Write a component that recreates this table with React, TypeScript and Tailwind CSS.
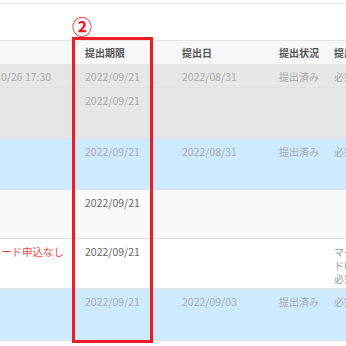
import React from 'react';

type Row = {
  bg: string;
  h: string;
  dim: boolean;
  cells: React.ReactNode[];
};

const rows: Row[] = [
  { bg: 'bg-[#e6e6e6]', h: 'h-[24px]', dim: true, cells: ['0/26 17:30', '2022/09/21', '2022/08/31', '提出済み', '必須'] },
  { bg: 'bg-[#e6e6e6]', h: 'h-[51px]', dim: true, cells: ['', '2022/09/21', '', '', ''] },
  { bg: 'bg-[#cdeafe]', h: 'h-[51px]', dim: true, cells: ['', '2022/09/21', '2022/08/31', '提出済み', '必須'] },
  { bg: 'bg-[#f9f9f9]', h: 'h-[49px]', dim: false, cells: ['', '2022/09/21', '', '', ''] },
  {
    bg: 'bg-white',
    h: 'h-[50px]',
    dim: false,
    cells: [
      <span className="text-[#f24a4a]">ード申込なし</span>,
      '2022/09/21',
      '',
      '',
      <span className="flex flex-col leading-[13.5px] text-[#999]">
        <span>マイナンバーカー</span>
        <span>ド申込なし</span>
        <span>必須</span>
      </span>,
    ],
  },
  { bg: 'bg-[#cdeafe]', h: 'h-[52px]', dim: true, cells: ['', '2022/09/21', '2022/09/03', '提出済み', '必須'] },
];

const widths = ['w-[73px] pl-[1px]', 'w-[97px] pl-[12px]', 'w-[97px] pl-[12px]', 'w-[55px] pl-[12px]', 'flex-1 pl-[12px]'];
const headers = ['', '提出期限', '提出日', '提出状況', '提出書類'];

export default function App() {
  return (
    <div className="relative w-[346px] h-[346px] overflow-hidden bg-white font-['Noto_Sans_CJK_JP','Noto_Sans',sans-serif]">
      <div className="h-[4px] border-b border-[#e8e8e8]" />
      {/* annotation label */}
      <div className="h-[36px] pl-[72px] pt-[12px]">
        <span className="text-[20px] leading-[20px] font-bold text-[#ee1c25]">②</span>
      </div>

      {/* header */}
      <div className="flex h-[24px] items-center bg-[#f7f7f7] border-t border-[#e6e6e6] text-[10px] font-bold text-[#555]">
        {headers.map((h, i) => (
          <div key={i} className={`${widths[i]} shrink-0 whitespace-nowrap overflow-hidden`}>{h}</div>
        ))}
      </div>

      {rows.map((r, ri) => (
        <div key={ri} className={`flex ${r.h} ${r.bg} border-b border-[#e2e2e2] text-[10.5px] leading-[13px] ${r.dim ? 'text-[#aaaaaa]' : 'text-[#666]'}`}>
          {r.cells.map((c, ci) => (
            <div key={ci} className={`${widths[ci]} shrink-0 pt-[6px] whitespace-nowrap overflow-hidden ${ci >= 3 ? 'text-[10px]' : ''}`}>{c}</div>
          ))}
        </div>
      ))}

      {/* red highlight box */}
      <div className="absolute left-[72px] top-[37px] w-[81px] h-[306px] border-[3px] border-[#ee1c25]" />
    </div>
  );
}
